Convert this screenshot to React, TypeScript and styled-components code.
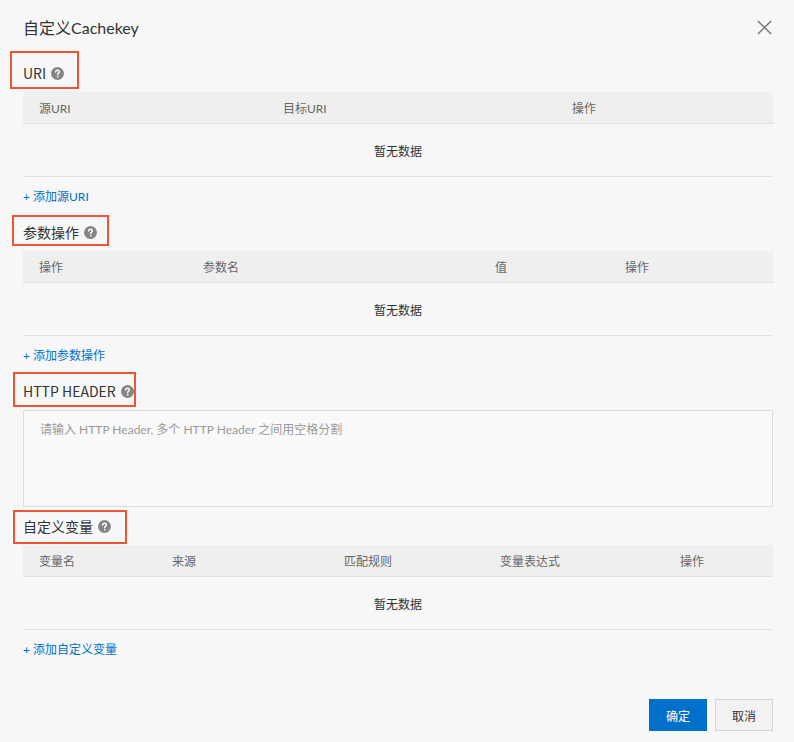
import React from "react";
import styled, { createGlobalStyle } from "styled-components";

const GlobalStyle = createGlobalStyle`
  html, body {
    margin: 0;
    padding: 0;
    background: #f7f7f7;
  }
  body {
    font-family: Lato, "Noto Sans CJK SC", sans-serif;
    color: #333;
  }
`;

type Column = { title: string; width: number };

const uriColumns: Column[] = [
  { title: "源URI", width: 244 },
  { title: "目标URI", width: 289 },
  { title: "操作", width: 217 },
];

const paramColumns: Column[] = [
  { title: "操作", width: 164 },
  { title: "参数名", width: 292 },
  { title: "值", width: 130 },
  { title: "操作", width: 164 },
];

const varColumns: Column[] = [
  { title: "变量名", width: 133 },
  { title: "来源", width: 172 },
  { title: "匹配规则", width: 156 },
  { title: "变量表达式", width: 180 },
  { title: "操作", width: 109 },
];

const Help = () => (
  <HelpIcon viewBox="0 0 12 12">
    <circle cx="6" cy="6" r="6" fill="#858585" />
    <path
      d="M4.3 4.6c0-1 .8-1.6 1.7-1.6s1.7.6 1.7 1.5c0 .7-.4 1-.9 1.3-.4.3-.6.5-.6 1v.3"
      fill="none"
      stroke="#fff"
      strokeWidth="1.3"
      strokeLinecap="round"
    />
    <circle cx="6.2" cy="9.1" r=".75" fill="#fff" />
  </HelpIcon>
);

const Section = ({
  label,
  box,
}: {
  label: string;
  box: { left: number; top: number; width: number; height: number };
}) => (
  <LabelRow>
    <Label>
      {label}
      <Help />
    </Label>
    <Highlight
      style={{ left: box.left, top: box.top, width: box.width, height: box.height }}
    />
  </LabelRow>
);

const EmptyTable = ({ columns }: { columns: Column[] }) => {
  const template = columns.map((c) => `${c.width}px`).join(" ");
  return (
    <Table>
      <HeadRow $cols={template}>
        {columns.map((c, i) => (
          <HeadCell key={i}>{c.title}</HeadCell>
        ))}
      </HeadRow>
      <EmptyRow>暂无数据</EmptyRow>
    </Table>
  );
};

export default function App() {
  return (
    <>
      <GlobalStyle />
      <Dialog>
        <Header>
          <Title>自定义Cachekey</Title>
          <Close viewBox="0 0 16 16">
            <path d="M1 1L15 15M15 1L1 15" stroke="#777" strokeWidth="1.6" />
          </Close>
        </Header>

        <Section label="URI" box={{ left: -13, top: -3, width: 69, height: 38 }} />
        <EmptyTable columns={uriColumns} />
        <AddLink>+ 添加源URI</AddLink>

        <Section label="参数操作" box={{ left: -11, top: 2, width: 97, height: 31 }} />
        <EmptyTable columns={paramColumns} />
        <AddLink>+ 添加参数操作</AddLink>

        <Section label="HTTP HEADER" box={{ left: -10, top: 0, width: 123, height: 35 }} />
        <HeaderInput placeholder="请输入 HTTP Header, 多个 HTTP Header 之间用空格分割" />

        <Section label="自定义变量" box={{ left: -10, top: 3, width: 114, height: 34 }} />
        <EmptyTable columns={varColumns} />
        <AddLink>+ 添加自定义变量</AddLink>

        <Footer>
          <Button $primary>确定</Button>
          <Button>取消</Button>
        </Footer>
      </Dialog>
    </>
  );
}

const Dialog = styled.div`
  width: 794px;
  height: 742px;
  box-sizing: border-box;
  padding: 0 21px 0 23px;
  background: #f7f7f7;
  display: flex;
  flex-direction: column;
`;

const Header = styled.div`
  height: 54px;
  display: flex;
  align-items: center;
  justify-content: space-between;
`;

const Title = styled.div`
  font-size: 16px;
  color: #333;
`;

const Close = styled.svg`
  width: 15px;
  height: 15px;
  margin-right: 1px;
`;

const LabelRow = styled.div`
  position: relative;
  height: 38px;
  display: flex;
  align-items: center;
`;

const Label = styled.div`
  display: flex;
  align-items: center;
  gap: 5px;
  font-family: "Noto Sans CJK SC", sans-serif;
  font-size: 14px;
  color: #333;
`;

const HelpIcon = styled.svg`
  width: 13px;
  height: 13px;
`;

const Highlight = styled.span`
  position: absolute;
  box-sizing: border-box;
  border: 2px solid #ee5533;
  pointer-events: none;
`;

const Table = styled.div`
  width: 750px;
  font-size: 12px;
`;

const HeadRow = styled.div<{ $cols: string }>`
  display: grid;
  grid-template-columns: ${(p) => p.$cols};
  height: 31px;
  align-items: center;
  background: #efefef;
  border-bottom: 1px solid #e3e3e3;
  color: #666;
`;

const HeadCell = styled.div`
  padding-left: 16px;
`;

const EmptyRow = styled.div`
  height: 53px;
  display: flex;
  align-items: center;
  justify-content: center;
  border-bottom: 1px solid #e3e3e3;
  color: #333;
  padding-top: 1px;
  box-sizing: border-box;
`;

const AddLink = styled.div`
  height: 36px;
  display: flex;
  align-items: center;
  font-size: 12px;
  color: #0070cc;
`;

const HeaderInput = styled.textarea`
  width: 750px;
  height: 97px;
  box-sizing: border-box;
  resize: none;
  border: 1px solid #dcdcdc;
  background: #f9f9f9;
  padding: 9px 16px;
  font-family: Lato, "Noto Sans CJK SC", sans-serif;
  font-size: 12px;
  outline: none;
  &::placeholder {
    color: #999;
  }
`;

const Footer = styled.div`
  margin-top: 33px;
  display: flex;
  justify-content: flex-end;
  gap: 8px;
`;

const Button = styled.button<{ $primary?: boolean }>`
  width: 58px;
  height: 32px;
  box-sizing: border-box;
  font-family: Lato, "Noto Sans CJK SC", sans-serif;
  font-size: 12px;
  border: 1px solid ${(p) => (p.$primary ? "#0070cc" : "#d4d4d4")};
  background: ${(p) => (p.$primary ? "#0070cc" : "#f2f2f2")};
  color: ${(p) => (p.$primary ? "#fff" : "#333")};
  cursor: pointer;
`;
